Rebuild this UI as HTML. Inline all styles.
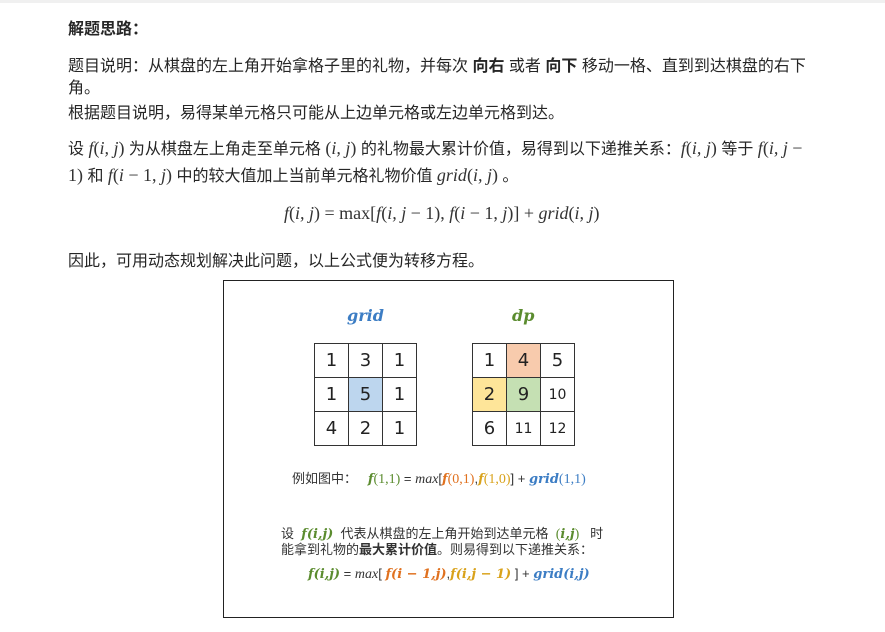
<!DOCTYPE html>
<html><head><meta charset="utf-8"><style>
*{margin:0;padding:0;box-sizing:border-box}
body{width:885px;height:632px;background:#fff;position:relative;overflow:hidden;font-family:"Liberation Sans","Noto Sans CJK SC",sans-serif;color:#262626;font-size:16px}
.a{position:absolute;white-space:nowrap}
.m{font-family:"Liberation Serif",serif;font-style:italic;color:#333;font-size:18px}
.r{font-family:"Liberation Serif",serif;color:#333;font-size:18px}
.box{position:absolute;left:223px;top:280px;width:451px;height:338px;border:1.5px solid #222}
table{position:absolute;border-collapse:collapse}
td{width:34px;height:34px;border:1.5px solid #333;text-align:center;font-size:18px;font-family:"DejaVu Sans",sans-serif;color:#222}
td.s{font-size:14px}
.g{color:#5b8c2f}.b{color:#3c7dc4}.o{color:#e0711f}.y{color:#d9a21b}
.fi{font-family:"DejaVu Serif","Liberation Serif",serif;font-style:italic;font-weight:bold}
.bx .r,.bx .m{font-size:14px}
</style></head><body>
<div class="a" style="left:0;top:0;width:885px;height:3px;background:#f0f0f0"></div>
<div class="a" style="left:68px;top:15px;font-weight:bold">解题思路：</div>
<div class="a" style="left:68px;top:52px">题目说明：从棋盘的左上角开始拿格子里的礼物，并每次 <b>向右</b> 或者 <b>向下</b> 移动一格、直到到达棋盘的右下</div>
<div class="a" style="left:68px;top:74px">角。</div>
<div class="a" style="left:68px;top:99px">根据题目说明，易得某单元格只可能从上边单元格或左边单元格到达。</div>
<div class="a" style="left:68px;top:135px">设 <span class="m">f</span><span class="r">(</span><span class="m">i, j</span><span class="r">)</span> 为从棋盘左上角走至单元格 <span class="r">(</span><span class="m">i, j</span><span class="r">)</span> 的礼物最大累计价值，易得到以下递推关系：<span class="m">f</span><span class="r">(</span><span class="m">i, j</span><span class="r">)</span> 等于 <span class="m">f</span><span class="r">(</span><span class="m">i, j</span> <span class="r">−</span></div>
<div class="a" style="left:68px;top:162px"><span class="r">1)</span> 和 <span class="m">f</span><span class="r">(</span><span class="m">i</span> <span class="r">− 1,</span> <span class="m">j</span><span class="r">)</span> 中的较大值加上当前单元格礼物价值 <span class="m">grid</span><span class="r">(</span><span class="m">i, j</span><span class="r">)</span> 。</div>
<div class="a" style="left:284px;top:203px"><span class="m">f</span><span class="r">(</span><span class="m">i, j</span><span class="r">) = max[</span><span class="m">f</span><span class="r">(</span><span class="m">i, j</span> <span class="r">− 1),</span> <span class="m">f</span><span class="r">(</span><span class="m">i</span> <span class="r">− 1,</span> <span class="m">j</span><span class="r">)] +</span> <span class="m">grid</span><span class="r">(</span><span class="m">i, j</span><span class="r">)</span></div>
<div class="a" style="left:68px;top:247px">因此，可用动态规划解决此问题，以上公式便为转移方程。</div>
<div class="box"></div>
<div class="a fi b" style="left:347px;top:306px;font-size:16px">grid</div>
<div class="a fi g" style="left:512px;top:306px;font-size:16px">dp</div>
<table style="left:314px;top:343px"><tr><td>1</td><td>3</td><td>1</td></tr><tr><td>1</td><td style="background:#bdd6ee">5</td><td>1</td></tr><tr><td>4</td><td>2</td><td>1</td></tr></table>
<table style="left:472px;top:343px"><tr><td>1</td><td style="background:#f8cbad">4</td><td>5</td></tr><tr><td style="background:#fee599">2</td><td style="background:#c5e0b3">9</td><td class="s">10</td></tr><tr><td>6</td><td class="s">11</td><td class="s">12</td></tr></table>
<div class="a bx" style="left:292px;top:468px;font-size:13px;color:#333">例如图中：&nbsp;&nbsp; <span class="fi g">f</span><span class="g r">(1,1)</span> = <span class="m">max</span>[<span class="fi o">f</span><span class="o r">(0,1)</span>,<span class="fi y">f</span><span class="y r">(1,0)</span>] + <span class="fi b">grid</span><span class="b r">(1,1)</span></div>
<div class="a bx" style="left:281px;top:523px;font-size:13px;color:#333">设&nbsp; <span class="fi g">f(i,j)</span>&nbsp; 代表从棋盘的左上角开始到达单元格 &nbsp;<span class="g r">(</span><span class="fi g">i,j</span><span class="g r">)</span>&nbsp;&nbsp; 时</div>
<div class="a bx" style="left:281px;top:539px;font-size:13px;color:#333">能拿到礼物的<b>最大累计价值</b>。则易得到以下递推关系：</div>
<div class="a bx" style="left:308px;top:566px;font-size:13px;color:#333"><span class="fi g">f(i,j)</span> = <span class="m">max</span>[ <span class="fi o">f(i − 1,j)</span>,<span class="fi y">f(i,j − 1)</span> ] + <span class="fi b">grid(i,j)</span></div>
</body></html>
